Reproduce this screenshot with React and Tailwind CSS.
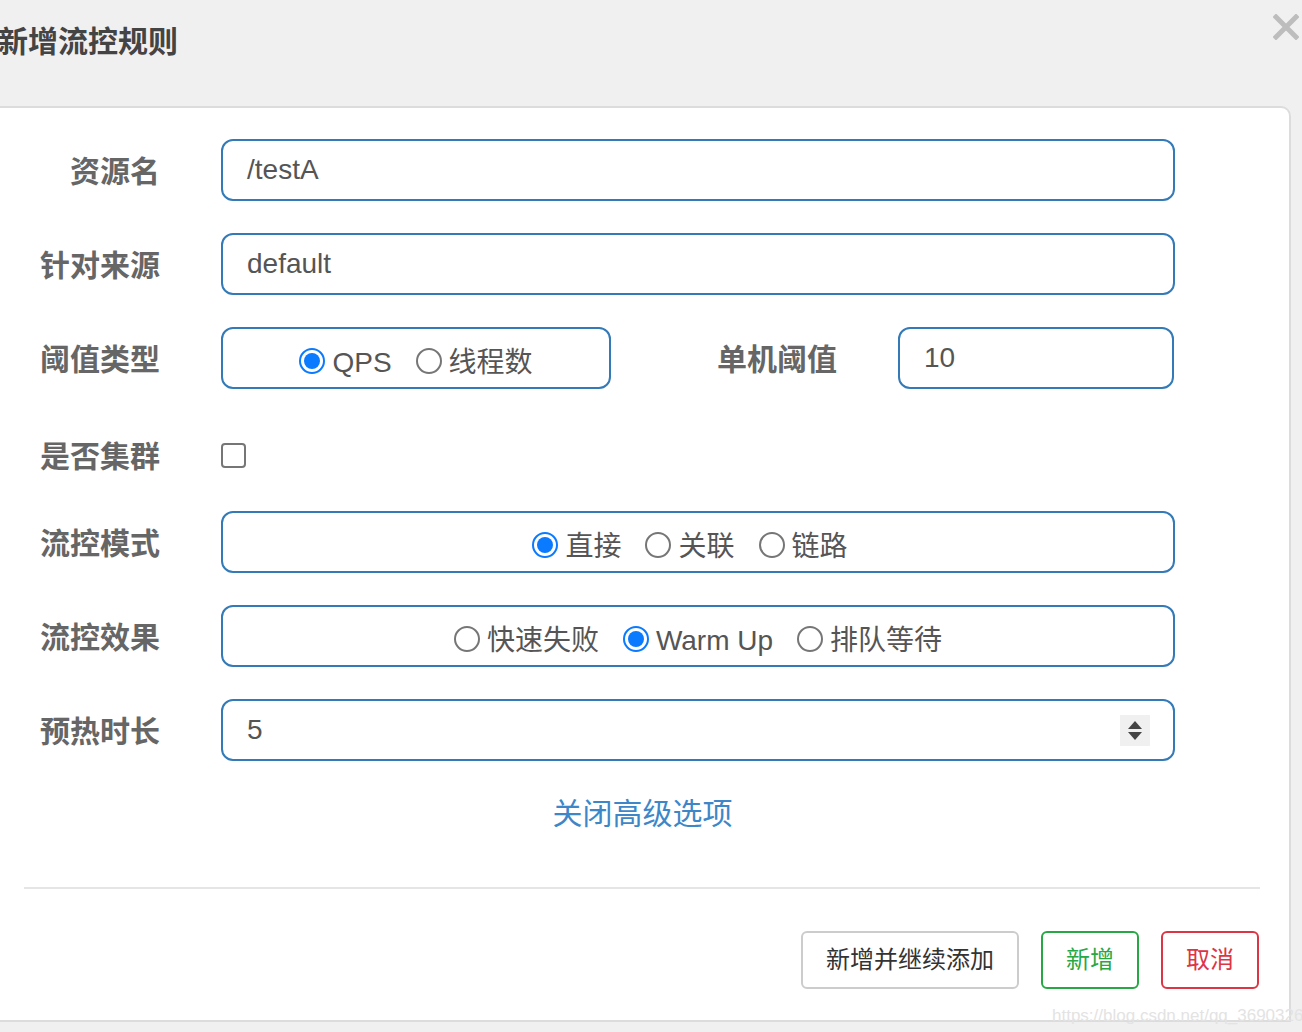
import React from "react";

const font = { fontFamily: '"Liberation Sans", "Noto Sans CJK SC", sans-serif' };

const Radio = ({ checked, label }) => (
  <span className="flex items-center gap-[7px]">
    {checked ? (
      <span className="flex items-center justify-center w-[26px] h-[26px] rounded-full border-2 border-[#0a7aff] bg-white">
        <span className="w-[16px] h-[16px] rounded-full bg-[#0a7aff]" />
      </span>
    ) : (
      <span className="w-[26px] h-[26px] rounded-full border-2 border-[#767676] bg-white" />
    )}
    <span className="text-[28px] text-[#555] leading-none pt-[3px]">{label}</span>
  </span>
);

const Label = ({ children, className = "w-[160px]" }) => (
  <div className={`${className} shrink-0 pt-[3px] text-right text-[30px] font-bold text-[#666]`}>{children}</div>
);

const Box = ({ children, className = "w-[954px]" }) => (
  <div className={`${className} h-[62px] ml-[61px] border-2 border-[#337ab7] rounded-[12px] flex items-center`}>
    {children}
  </div>
);

export default function App() {
  return (
    <div className="relative w-[1302px] h-[1032px] bg-[#f0f0f0] overflow-hidden" style={font}>
      {/* header */}
      <div className="relative h-[106px]">
        <div className="pt-[24px] -ml-[2px] text-[30px] leading-[36px] font-bold text-[#444]">新增流控规则</div>
        <svg className="absolute right-[3px] top-[14px]" width="26" height="26" viewBox="0 0 26 26">
          <path d="M3 3 L23 23 M23 3 L3 23" stroke="#bdbdbd" strokeWidth="5" strokeLinecap="square" />
        </svg>
      </div>

      {/* card */}
      <div className="w-[1291px] h-[916px] bg-white border-t-2 border-r-2 border-b-2 border-[#dcdcdc] rounded-tr-[10px]">
        <div className="pt-[31px] flex flex-col gap-[32px]">
          <div className="flex items-center h-[62px]">
            <Label>资源名</Label>
            <Box>
              <span className="pl-[24px] text-[28px] text-[#555]">/testA</span>
            </Box>
          </div>
          <div className="flex items-center h-[62px]">
            <Label>针对来源</Label>
            <Box>
              <span className="pl-[24px] text-[28px] text-[#555]">default</span>
            </Box>
          </div>
          <div className="flex items-center h-[62px]">
            <Label>阈值类型</Label>
            <Box className="w-[390px] justify-center gap-[24px] pt-[6px]">
              <Radio checked label="QPS" />
              <Radio label="线程数" />
            </Box>
            <Label className="w-[226px]">单机阈值</Label>
            <Box className="w-[276px]">
              <span className="pl-[24px] text-[28px] text-[#555]">10</span>
            </Box>
          </div>
          <div className="flex items-center h-[58px] pt-[10px]">
            <Label>是否集群</Label>
            <div className="ml-[61px] w-[25px] h-[25px] border-2 border-[#767676] rounded-[4px] bg-white" />
          </div>
          <div className="flex items-center h-[62px]">
            <Label>流控模式</Label>
            <Box className="w-[954px] justify-center gap-[24px] pt-[6px] pr-[16px]">
              <Radio checked label="直接" />
              <Radio label="关联" />
              <Radio label="链路" />
            </Box>
          </div>
          <div className="flex items-center h-[62px]">
            <Label>流控效果</Label>
            <Box className="w-[954px] justify-center gap-[24px] pt-[6px]">
              <Radio label="快速失败" />
              <Radio checked label="Warm Up" />
              <Radio label="排队等待" />
            </Box>
          </div>
          <div className="flex items-center h-[62px]">
            <Label>预热时长</Label>
            <Box className="w-[954px] justify-between">
              <span className="pl-[24px] text-[28px] text-[#555]">5</span>
              <div className="mr-[23px] w-[30px] h-[31px] bg-[#f0f0f0] flex flex-col items-center justify-center gap-[3px]">
                <svg width="14" height="8" viewBox="0 0 14 8"><path d="M7 0 L14 8 L0 8 Z" fill="#444" /></svg>
                <svg width="14" height="8" viewBox="0 0 14 8"><path d="M0 0 L14 0 L7 8 Z" fill="#444" /></svg>
              </div>
            </Box>
          </div>
        </div>

        <div className="mt-[32px] h-[40px] flex items-center justify-center pr-[4px]">
          <span className="text-[30px] text-[#3d87c9]">关闭高级选项</span>
        </div>

        <div className="mt-[54px] mx-[24px] w-[1236px] h-[2px] bg-[#e5e5e5]" />

        <div className="mt-[42px] pr-[30px] flex justify-end gap-[22px]">
          <button className="w-[218px] h-[58px] border-2 border-[#cccccc] rounded-[6px] text-[24px] text-[#333] bg-white">
            新增并继续添加
          </button>
          <button className="w-[98px] h-[58px] border-2 border-[#28a745] rounded-[6px] text-[24px] text-[#28a745] bg-white">
            新增
          </button>
          <button className="w-[98px] h-[58px] border-2 border-[#dc3545] rounded-[6px] text-[24px] text-[#dc3545] bg-white">
            取消
          </button>
        </div>
      </div>

      <div className="absolute left-[1052px] top-[1003px] text-[17px] text-[#e3e3e3] whitespace-nowrap">
        https://blog.csdn.net/qq_36903261
      </div>
    </div>
  );
}
